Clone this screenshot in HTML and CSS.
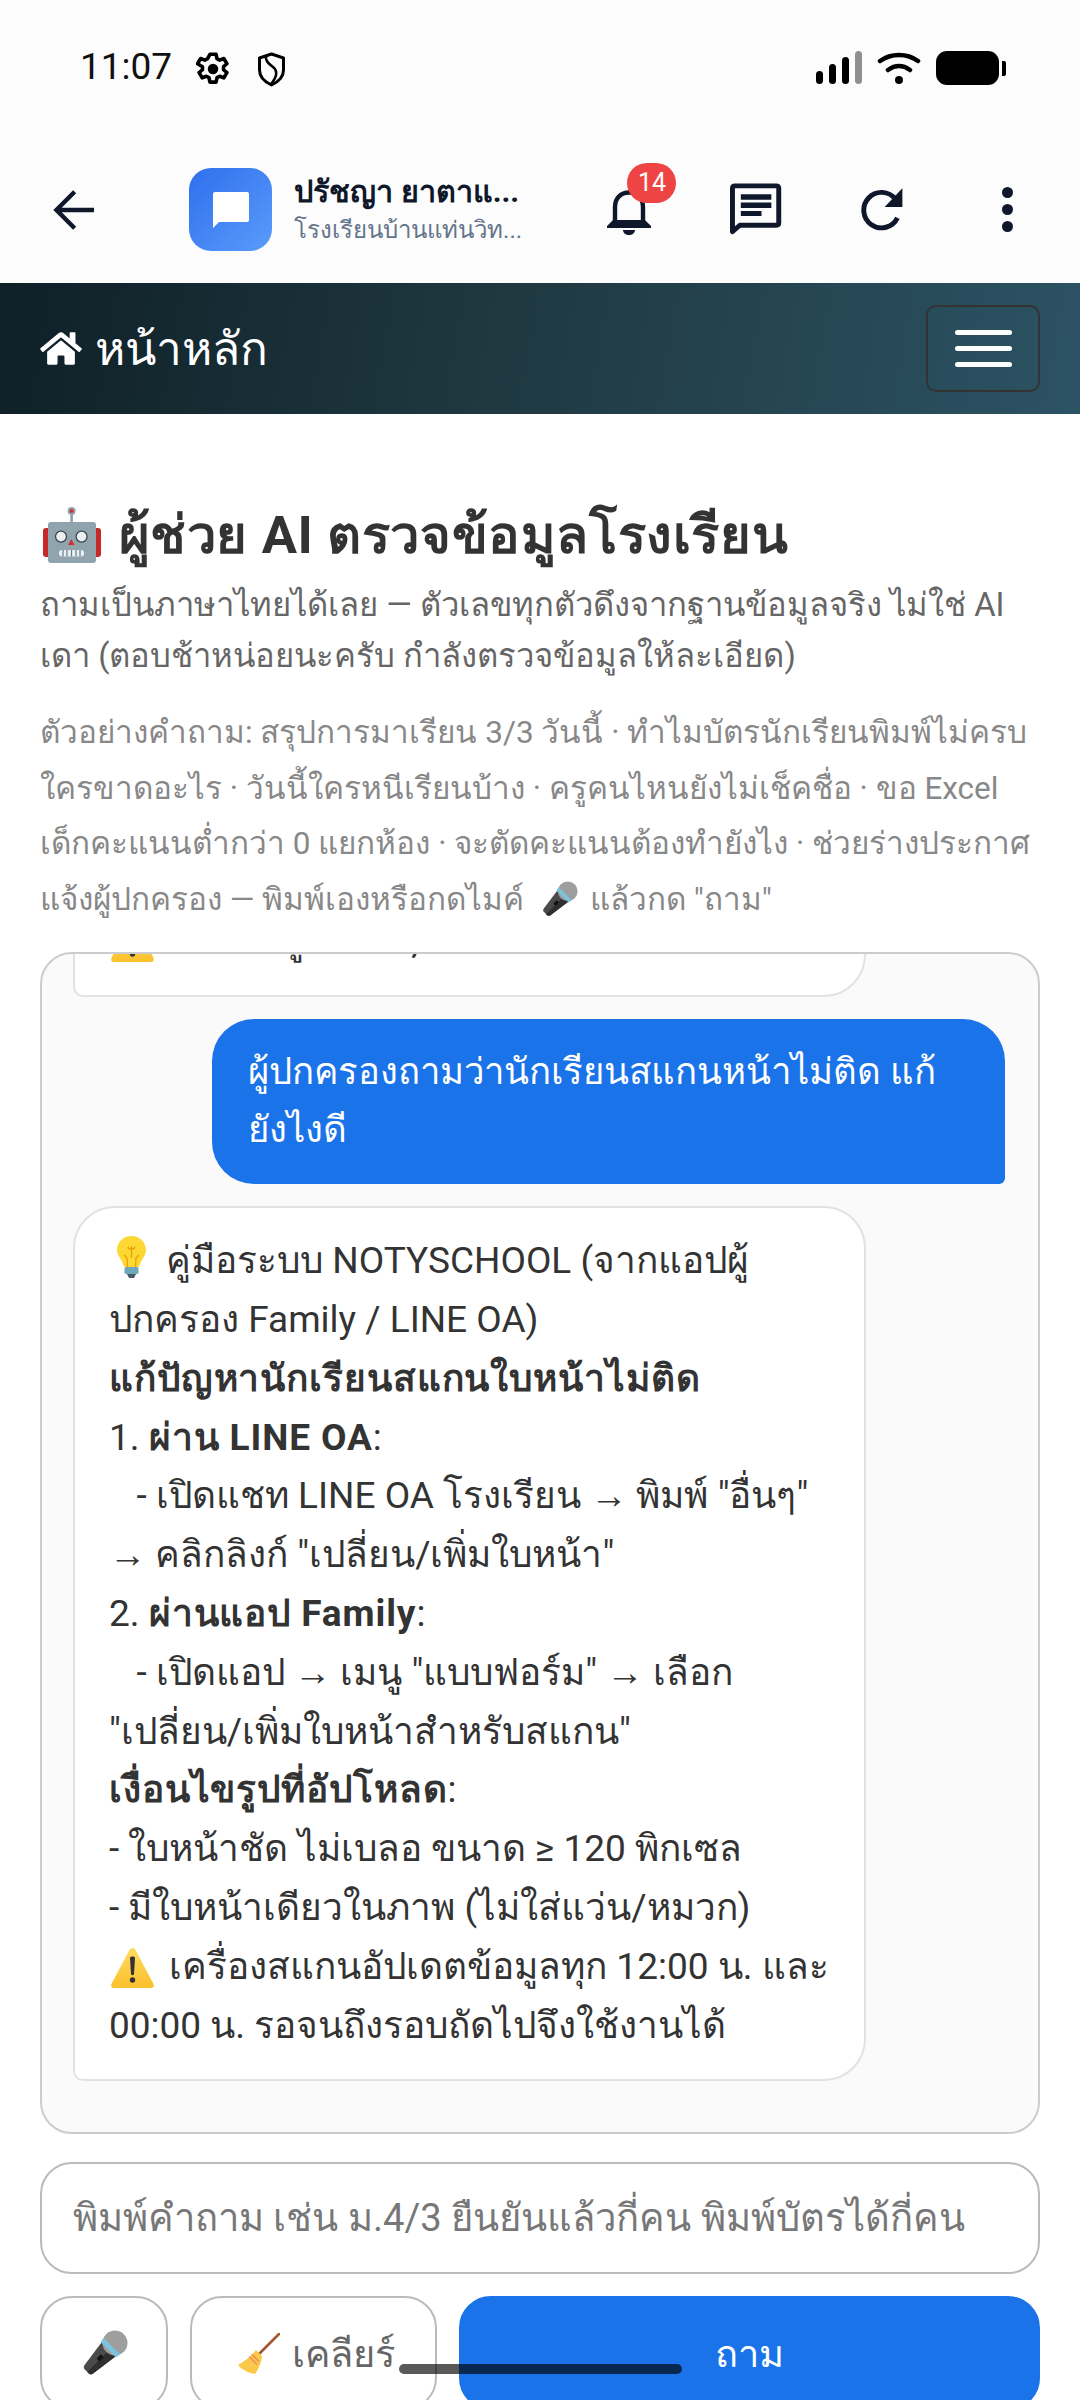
FILE: index.html
```html
<!DOCTYPE html>
<html lang="th">
<head>
    <meta charset="UTF-8">
    <title>ผู้ช่วย AI</title>
    <link rel="stylesheet" href="styles.css">
</head>
<body>
    <div class="statusbar">
        <span class="time">11:07</span>
        <svg class="st-gear" viewBox="1 1 22 22"><path fill="none" stroke="#000" stroke-width="2.300" stroke-linejoin="round" d="M10 2.500h4l.6 2.900 1.700.9 2.700-1.100 2 3.400-2.200 1.900v2l2.200 1.900-2 3.400-2.700-1.100-1.700.9-.6 2.900h-4l-.6-2.900-1.700-.9-2.700 1.100-2-3.400 2.200-1.900v-2L2 8.600l2-3.400 2.700 1.100 1.700-.9z"/><circle cx="12" cy="12" r="3.400"/></svg>
        <svg class="st-shield" viewBox="0 0 29 35"><path fill="none" stroke="#000" stroke-width="3" stroke-linejoin="round" d="M14.500 2l12 4v12c0 7-5.500 12-12 15-6.500-3-12-8-12-15V6z"/><path fill="none" stroke="#000" stroke-width="2.600" d="M9 3c-1 6 3 9 7 12 5 4 4 10-2 17"/></svg>
        <span class="grow"></span>
        <div class="signal"><i class="b1"></i><i class="b2"></i><i class="b3"></i><i class="b4"></i></div>
        <svg class="st-wifi" viewBox="0 0 44 34"><path fill="none" stroke="#000" stroke-width="4.500" stroke-linecap="round" d="M3 10c11-8 27-8 38 0M11 19c7-5 15-5 22 0"/><circle cx="22" cy="29" r="4"/></svg>
        <div class="battery"><div class="battery-body"></div><div class="battery-nub"></div></div>
    </div>

    <div class="appbar">
        <svg class="back" viewBox="0 0 42 42"><path fill="none" stroke="#0f172a" stroke-width="4.500" d="M42 21H4M22 2.500L3.500 21 22 39.500"/></svg>
        <div class="app-logo">
            <svg viewBox="0 0 36 36"><path fill="#fff" d="M2 0h32a2 2 0 0 1 2 2v26a2 2 0 0 1-2 2H6l-6 6V2a2 2 0 0 1 2-2z"/></svg>
        </div>
        <div class="app-title">
            <div class="app-name">ปรัชญา ยาตาแ...</div>
            <div class="app-school">โรงเรียนบ้านแท่นวิท...</div>
        </div>
        <div class="bell">
            <svg viewBox="0 0 44 50"><path fill="none" stroke="#0f172a" stroke-width="4.400" d="M8 38V22C8 13 14 7.500 22 7.500S36 13 36 22v16"/><path fill="#0f172a" d="M0 41l6-6h32l6 6v2H0zM16 45h12c0 3-3 5-6 5s-6-2-6-5z"/></svg>
            <span class="badge">14</span>
        </div>
        <svg class="ic-chat" viewBox="0 0 52 54"><path fill="none" stroke="#0f172a" stroke-width="5" stroke-linejoin="round" d="M2.500 5c0-1.500 1-2.500 2.500-2.500h42c1.500 0 2.500 1 2.500 2.500v35c0 1.500-1 2.500-2.500 2.500H10L2.500 49z"/><path fill="#0f172a" d="M11 11h31v5.500H11zM11 19.500h31V25H11zM11 28h21v5H11z"/></svg>
        <svg class="ic-refresh" viewBox="0 0 44 44"><path fill="none" stroke="#0f172a" stroke-width="5" d="M37 30a18 18 0 1 1-2-19"/><path fill="#0f172a" d="M42 0v19H24z"/></svg>
        <div class="dots"><i></i><i></i><i></i></div>
    </div>

    <nav class="navbar">
        <svg class="home" viewBox="0 0 576 512"><path fill="#fff" d="M280.400 148.300L96 300.100V464a16 16 0 0 0 16 16l112-.3a16 16 0 0 0 15.900-16V368a16 16 0 0 1 16-16h64a16 16 0 0 1 16 16v95.600a16 16 0 0 0 16 16.100L464 480a16 16 0 0 0 16-16V300L295.700 148.300a12.200 12.200 0 0 0-15.300 0zM571.600 251.500L488 182.600V44.100a12 12 0 0 0-12-12h-56a12 12 0 0 0-12 12v72.600L318.500 43a48 48 0 0 0-61 0L4.300 251.500a12 12 0 0 0-1.600 16.900l25.500 31A12 12 0 0 0 45.200 301l235.200-193.700a12.200 12.200 0 0 1 15.300 0L530.900 301a12 12 0 0 0 16.900-1.600l25.500-31a12 12 0 0 0-1.700-16.900z"/></svg>
        <span class="brand">หน้าหลัก</span>
        <span class="grow"></span>
        <div class="toggler"><i></i><i></i><i></i></div>
    </nav>

    <main class="content">
        <h1 class="title">
            <svg class="emoji-robot" viewBox="0 0 58 56"><path fill="#8d9fa8" d="M27.300 3h2.600v14h-2.600z"/><circle cx="28.600" cy="4" r="4" fill="#90a4ae"/><circle cx="28.600" cy="4" r="2" fill="#d32f2f"/><rect x="0" y="21" width="8" height="29" rx="3" fill="#c62828"/><rect x="50" y="21" width="8" height="29" rx="3" fill="#c62828"/><rect x="5" y="15" width="48" height="41" rx="3" fill="#90a4ae"/><circle cx="18" cy="29.600" r="5.500" fill="#eceff1" stroke="#37474f" stroke-width="1.300"/><circle cx="38.600" cy="29.600" r="5.500" fill="#eceff1" stroke="#37474f" stroke-width="1.300"/><path fill="#d32f2f" d="M28.300 32l3.200 6h-6.400z"/><rect x="16" y="43" width="25" height="6.500" rx="3" fill="#eceff1"/><path stroke="#607d8b" stroke-width="1.200" d="M20 43v6.500M24 43v6.500M28.500 43v6.500M33 43v6.500M37 43v6.500"/></svg>
            ผู้ช่วย AI ตรวจข้อมูลโรงเรียน
        </h1>
        <p class="lead">ถามเป็นภาษาไทยได้เลย — ตัวเลขทุกตัวดึงจากฐานข้อมูลจริง ไม่ใช่ AI<br>เดา (ตอบช้าหน่อยนะครับ กำลังตรวจข้อมูลให้ละเอียด)</p>
        <p class="examples">ตัวอย่างคำถาม: สรุปการมาเรียน 3/3 วันนี้ · ทำไมบัตรนักเรียนพิมพ์ไม่ครบ<br>ใครขาดอะไร · วันนี้ใครหนีเรียนบ้าง · ครูคนไหนยังไม่เช็คชื่อ · ขอ Excel<br>เด็กคะแนนต่ำกว่า 0 แยกห้อง · จะตัดคะแนนต้องทำยังไง · ช่วยร่างประกาศ<br>แจ้งผู้ปกครอง — พิมพ์เองหรือกดไมค์ <svg class="emoji-mic" viewBox="0 0 47 47"><use href="#mic"/></svg> แล้วกด "ถาม"</p>

        <div class="chatbox">
            <div class="bubble bot">
                <svg class="emoji-warn" viewBox="0 0 43 40"><use href="#warn"/></svg> ทดลองดูอีกครั้ง, แล้วติดต่อเจ้าหน้าที่ของโรงเรียน
            </div>
            <div class="bubble user">ผู้ปกครองถามว่านักเรียนสแกนหน้าไม่ติด แก้ยังไงดี</div>
            <div class="bubble bot">
                <svg class="emoji-bulb" viewBox="0 0 29 42"><path fill="#fdd835" d="M14.500 0C6.500 0 0 6 0 14c0 6 5 9 7 17h15c2-8 7-11 7-17 0-8-6.500-14-14.500-14z"/><path fill="none" stroke="#e6a100" stroke-width="1.300" d="M10.500 31l-.5-9-3-3M18.500 31l.5-9 3-3M14.500 22V10M11 11c1 3 6 3 7 0"/><rect x="7.500" y="31" width="14" height="7" rx="1.500" fill="#6fa8b8"/><path fill="#455a64" d="M10 38h9l-2 4h-5z"/></svg> คู่มือระบบ NOTYSCHOOL (จากแอปผู้<br>ปกครอง Family / LINE OA)<br>
                <b>แก้ปัญหานักเรียนสแกนใบหน้าไม่ติด</b><br>
                1. <b>ผ่าน LINE OA</b>:<br>
                &nbsp;&nbsp;&nbsp;- เปิดแชท LINE OA โรงเรียน → พิมพ์ "อื่นๆ"<br>
                → คลิกลิงก์ "เปลี่ยน/เพิ่มใบหน้า"<br>
                2. <b>ผ่านแอป Family</b>:<br>
                &nbsp;&nbsp;&nbsp;- เปิดแอป → เมนู "แบบฟอร์ม" → เลือก<br>
                "เปลี่ยน/เพิ่มใบหน้าสำหรับสแกน"<br>
                <b>เงื่อนไขรูปที่อัปโหลด</b>:<br>
                - ใบหน้าชัด ไม่เบลอ ขนาด ≥ 120 พิกเซล<br>
                - มีใบหน้าเดียวในภาพ (ไม่ใส่แว่น/หมวก)<br>
                <svg class="emoji-warn" viewBox="0 0 43 40"><use href="#warn"/></svg> เครื่องสแกนอัปเดตข้อมูลทุก 12:00 น. และ<br>
                00:00 น. รอจนถึงรอบถัดไปจึงใช้งานได้
            </div>
        </div>

        <div class="ask-input">พิมพ์คำถาม เช่น ม.4/3 ยืนยันแล้วกี่คน พิมพ์บัตรได้กี่คน</div>

        <div class="actions">
            <div class="btn btn-mic"><svg class="emoji-mic-lg" viewBox="0 0 47 47"><use href="#mic"/></svg></div>
            <div class="btn btn-clear">
                <svg class="emoji-broom" viewBox="0 0 42 41"><path stroke="#a5552f" stroke-width="2.600" stroke-linecap="round" d="M41 1L21 21"/><path fill="#fbc94a" d="M18 17l6 6c-1 8-4 14-7 18-6-1-13-4-17-9 5-3 13-8 18-15z"/><path fill="none" stroke="#ee8a5a" stroke-width="1.300" d="M13.500 21l7.500 7.500M11 23.500l8 8"/></svg>
                <span>เคลียร์</span>
            </div>
            <div class="btn btn-ask">ถาม</div>
        </div>
    </main>

    <div class="home-indicator"></div>

    <svg class="defs" width="0" height="0">
        <defs>
            <linearGradient id="warn-fill" x1="0" y1="0" x2="0" y2="1"><stop offset="0" stop-color="#ffdc5e"/><stop offset="1" stop-color="#fbc02d"/></linearGradient>
        </defs>
        <symbol id="warn" viewBox="0 0 43 40"><path fill="url(#warn-fill)" d="M21.500 0c1.500 0 2.500 1 3.300 2.500l17.500 33c1 2 .5 4.500-2 4.500H2.700c-2.500 0-3-2.500-2-4.500l17.500-33C19 1 20 0 21.500 0z"/><path fill="#333" d="M19 10c0-2 5-2 5 0l-1 16c0 1.500-3 1.500-3 0z"/><circle cx="21.500" cy="32" r="2.700" fill="#333"/></symbol>
        <symbol id="mic" viewBox="0 0 47 47"><g transform="translate(34 13) rotate(45)"><path fill="#4a4a4a" d="M-10 8h20l-4 29c-.3 2-1.500 3-3 3h-6c-1.500 0-2.700-1-3-3z"/><path fill="#2f2f2f" d="M1 8h9l-4 29c-.3 2-1.500 3-3 3H1z"/><rect x="-2" y="18" width="4" height="6" fill="#111"/><circle r="12.500" fill="#9e9e9e"/><path fill="#7cc4de" d="M-11.500 4.500h23c0 0 .5 2-1 5h-21c-1.500-3-1-5-1-5z"/></g></symbol>
    </svg>
</body>
</html>
```

FILE: styles.css
```css
html, body {
    margin: 0;
    padding: 0;
    width: 1080px;
    height: 2400px;
    overflow: hidden;
    background: #fff;
    font-family: "Roboto", "Noto Sans", sans-serif;
    color: #333;
}

.grow {
    flex: 1;
}

.defs {
    position: absolute;
}

/* status bar */
.statusbar {
    height: 140px;
    box-sizing: border-box;
    padding: 48px 74px 0 80px;
    background: #fcfcfc;
    display: flex;
    align-items: flex-start;
}

.time {
    font-size: 37px;
    line-height: 37px;
    color: #111;
    margin-right: 24px;
}

.st-gear {
    width: 34px;
    height: 34px;
    margin-top: 4px;
    margin-right: 27px;
}

.st-shield {
    width: 29px;
    height: 35px;
    margin-top: 4px;
}

.signal {
    display: flex;
    align-items: flex-end;
    gap: 6px;
    height: 33px;
    margin-top: 3px;
    margin-right: 15px;
}

.signal i {
    width: 7px;
    background: #000;
    border-radius: 4px;
}

.b1 { height: 13px; }
.b2 { height: 20px; }
.b3 { height: 27px; }
.b4 { height: 33px; background: #8f8f8f !important; }

.st-wifi {
    width: 44px;
    height: 34px;
    margin-top: 3px;
    margin-right: 15px;
}

.battery {
    display: flex;
    align-items: center;
    gap: 3px;
    margin-top: 3px;
}

.battery-body {
    width: 63px;
    height: 34px;
    background: #000;
    border-radius: 11px;
}

.battery-nub {
    width: 4px;
    height: 15px;
    background: #000;
    border-radius: 0 2px 2px 0;
}

/* app bar */
.appbar {
    height: 143px;
    box-sizing: border-box;
    padding: 28px 67px 32px 53px;
    background: #fcfcfc;
    display: flex;
    align-items: center;
}

.back {
    width: 42px;
    height: 42px;
    margin-right: 95px;
}

.app-logo {
    width: 84px;
    height: 83px;
    border-radius: 22px;
    background: linear-gradient(135deg, #2f6fed, #5a9bfb);
    display: flex;
    align-items: center;
    justify-content: center;
    margin-right: 22px;
}

.app-logo svg {
    width: 36px;
    height: 36px;
}

.app-title {
    width: 232px;
    white-space: nowrap;
}

.app-name {
    font-size: 30.500px;
    font-weight: 700;
    line-height: 40px;
    color: #0f172a;
}

.app-school {
    font-size: 24px;
    line-height: 36px;
    color: #64748b;
}

.bell {
    position: relative;
    width: 44px;
    height: 50px;
    margin-left: 85px;
    margin-right: 79px;
}

.bell svg {
    width: 44px;
    height: 50px;
    display: block;
}

.badge {
    position: absolute;
    left: 20px;
    top: -22px;
    width: 49px;
    height: 40px;
    border-radius: 20px;
    background: #ef4444;
    color: #fff;
    font-size: 25px;
    line-height: 40px;
    text-align: center;
}

.ic-chat {
    width: 52px;
    height: 54px;
    margin-right: 79px;
}

.ic-refresh {
    width: 44px;
    height: 44px;
    margin-right: 98px;
}

.dots {
    display: flex;
    flex-direction: column;
    gap: 6px;
}

.dots i {
    width: 11px;
    height: 11px;
    border-radius: 50%;
    background: #0f172a;
}

/* navbar */
.navbar {
    height: 131px;
    box-sizing: border-box;
    padding: 0 40px;
    background: linear-gradient(100deg, #0f2027, #203a43 50%, #2c5364);
    display: flex;
    align-items: center;
}

.home {
    width: 42px;
    height: 37px;
    margin-right: 13px;
}

.brand {
    font-size: 46px;
    color: #fff;
}

.toggler {
    width: 114px;
    height: 87px;
    box-sizing: border-box;
    border: 2px solid #333;
    border-radius: 10px;
    display: flex;
    flex-direction: column;
    align-items: center;
    justify-content: center;
    gap: 11px;
}

.toggler i {
    width: 57px;
    height: 5px;
    border-radius: 3px;
    background: #fff;
}

/* page */
.content {
    padding: 0 40px;
}

.title {
    margin: 89px 0 0;
    font-size: 52.500px;
    letter-spacing: 0.600px;
    line-height: 64px;
    font-weight: 700;
    color: #333;
    white-space: nowrap;
}

.emoji-robot {
    width: 58px;
    height: 56px;
    vertical-align: -10px;
    margin: 0 4px 0 3px;
}

.lead {
    margin: 13px 0 0;
    font-size: 32.800px;
    line-height: 51px;
    color: #666;
    white-space: nowrap;
}

.examples {
    margin: 23px 0 0;
    font-size: 31.500px;
    line-height: 55.600px;
    color: #888;
    white-space: nowrap;
}

.emoji-mic {
    width: 37px;
    height: 37px;
    vertical-align: -8px;
    margin: 0 4px 0 9px;
}

.chatbox {
    height: 1182px;
    box-sizing: border-box;
    margin-top: 25px;
    padding: 0 33px 51px 31px;
    border: 2px solid #ccc;
    border-radius: 32px;
    background: #fafafa;
    overflow: hidden;
    display: flex;
    flex-direction: column;
    justify-content: flex-end;
    gap: 22px;
}

.bubble {
    flex-shrink: 0;
    box-sizing: border-box;
    font-size: 37px;
    line-height: 58.800px;
    white-space: nowrap;
}

.bubble b {
    letter-spacing: 0.900px;
}

.bot {
    width: 793px;
    padding: 24px 34px;
    background: #fff;
    border: 2px solid #e2e2e2;
    border-radius: 42px 42px 42px 10px;
    color: #333;
}

.user {
    width: 793px;
    padding: 24px 34px 24px 36px;
    align-self: flex-end;
    background: #1a73e8;
    color: #fff;
    font-size: 36.500px;
    white-space: normal;
    border-radius: 42px 42px 6px 42px;
}

.emoji-warn {
    width: 43px;
    height: 40px;
    vertical-align: -9px;
    margin: 0 6px 0 2px;
}

.emoji-bulb {
    width: 29px;
    height: 42px;
    vertical-align: -5px;
    margin: 0 11px 0 8px;
}

.ask-input {
    height: 112px;
    box-sizing: border-box;
    margin-top: 28px;
    padding: 0 31px;
    border: 2px solid #bbb;
    border-radius: 32px;
    background: #fff;
    font-size: 38.200px;
    line-height: 108px;
    color: #777;
    white-space: nowrap;
    overflow: hidden;
}

.actions {
    display: flex;
    gap: 22px;
    margin-top: 22px;
}

.btn {
    height: 114px;
    box-sizing: border-box;
    border: 2px solid #bbb;
    border-radius: 32px;
    display: flex;
    align-items: center;
    justify-content: center;
    font-size: 38px;
    color: #666;
    white-space: nowrap;
}

.btn-mic {
    width: 128px;
}

.emoji-mic-lg {
    width: 47px;
    height: 47px;
}

.btn-clear {
    width: 247px;
    gap: 12px;
    padding-left: 6px;
}

.emoji-broom {
    width: 42px;
    height: 41px;
    flex-shrink: 0;
}

.btn-ask {
    flex: 1;
    background: #1a73e8;
    border-color: #1a73e8;
    color: #fff;
}

.home-indicator {
    position: fixed;
    left: 399px;
    top: 2364px;
    width: 283px;
    height: 10px;
    border-radius: 5px;
    background: rgba(0, 0, 0, 0.65);
}
```
